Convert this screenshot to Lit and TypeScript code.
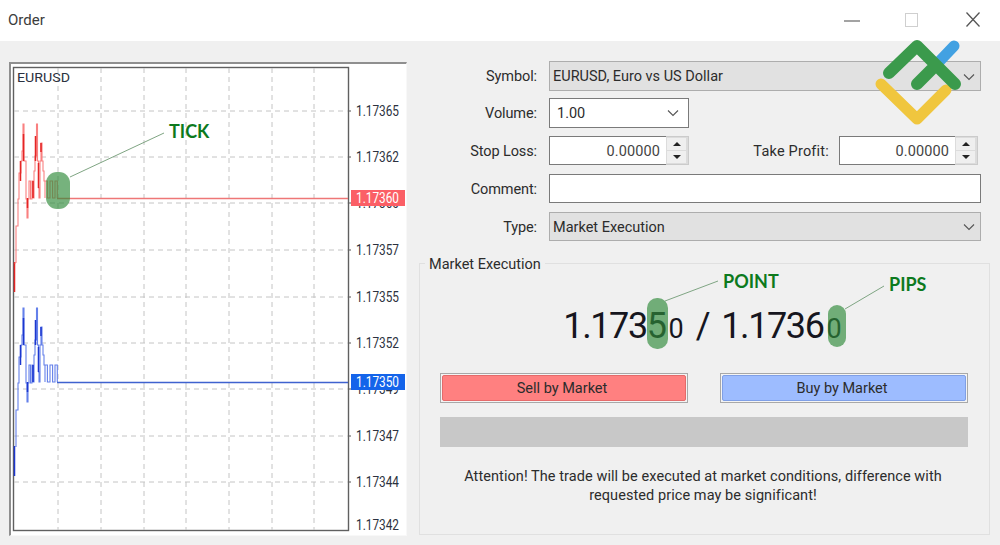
import { LitElement, html, css, svg } from "lit";
import { customElement } from "lit/decorators.js";

const VX = [58, 101, 144, 186, 229, 272, 314];
const HY = [111, 157, 203, 250, 297, 343, 389, 436, 482];
const LABELS: [string, number][] = [
  ["1.17365", 111], ["1.17362", 157], ["1.17360", 203], ["1.17357", 250], ["1.17355", 297],
  ["1.17352", 343], ["1.17349", 389], ["1.17347", 436], ["1.17344", 482], ["1.17342", 525],
];
const WAVE = "M16,447V410H18V383H19V357H21V345H22V335H23V308H24V345H26V383H27V402H28V383H29V365H30.5V383H32V365H33V382H34V355H35V340H36.5V308H37.5V345H38.5V372H39V382H40V345H41V327H42V345H43V355H44V365H45V382V365H47.4V382H50V365H52.6V382H55V365H57.3V382";
const THICK = "M14.5,446V476M20.5,345V365M23.5,318V345M27.5,382V392M33,365V382M35.5,320V345M38.5,347V372M41,327V336";

@customElement("app-root")
export class AppRoot extends LitElement {
  static styles = css`
    :host { display: block; width: 1000px; height: 545px; position: relative; overflow: hidden; background: #f0f0f0;
      font-family: Roboto, "Noto Sans", sans-serif; font-size: 14.5px; color: #2c2c2c; }
    .title { height: 41px; background: #fff; display: flex; align-items: center; justify-content: space-between; padding: 0 20px 2px 8px; box-sizing: border-box; font-size: 15px; color: #3c3c3c; }
    .winbtns { display: flex; align-items: center; }
    .winbtns svg { display: block; }
    .winbtns .mx { margin: 0 48px 0 45px; }
    .body { display: flex; padding: 20px 10px 0 9px; gap: 12px; }
    .chart { width: 398px; height: 474px; margin-top: 1px; flex: none; box-sizing: border-box; border-top: 2px solid #8f8f8f; border-left: 2px solid #8f8f8f; border-right: 1px solid #f8f8f8; border-bottom: 1px solid #f8f8f8; background: #fff; overflow: hidden; }
    .chart svg { display: block; margin: -2px 0 0 -2px; }
    .side { width: 571px; flex: none; }
    .form { display: flex; flex-direction: column; padding-right: 9px; }
    .row { display: flex; align-items: center; height: 29px; margin-top: 9px; }
    .row.r1 { height: 30px; margin-top: 0; }
    .row.r2 { height: 30px; margin-top: 7px; }
    .row.r3 { margin-top: 8px; }
    .end { width: 3px; flex: none; }
    .lbl { width: 118px; margin-right: 12px; text-align: right; flex: none; letter-spacing: -.1px; padding-top: 1px; box-sizing: border-box; }
    .box { height: 100%; box-sizing: border-box; border: 1px solid #7a7a7a; background: #fff; display: flex; align-items: center; padding: 1px 3px 0; }
    .select { flex: 1; background: #e1e1e1; border-color: #adadad; justify-content: space-between; padding-right: 5px; }
    .vol { width: 140px; flex: none; justify-content: space-between; padding: 0 9px 0 7px; }
    .chev { display: block; flex: none; }
    .spin { display: flex; width: 140px; flex: none; height: 100%; }
    .spin.tp { width: 139px; }
    .spin .box { flex: 1; justify-content: flex-end; padding-right: 6px; border-right: none; color: #444; letter-spacing: .1px; }
    .arrows { width: 23px; flex: none; display: flex; flex-direction: column; gap: 1px; box-sizing: border-box; padding: 1px 2px 1px 1px; background: #dcdcdc; border: 1px solid #cbcbcb; border-left: none; }
    .arrows span { flex: 1; background: #efefef; display: flex; align-items: center; justify-content: center; }
    .up { width: 0; height: 0; border: 4px solid transparent; border-top: none; border-bottom: 4px solid #222; }
    .dn { width: 0; height: 0; border: 4px solid transparent; border-bottom: none; border-top: 4px solid #222; }
    .tpl { margin-left: auto; margin-right: 10px; letter-spacing: .2px; }
    .comment { flex: 1; }
    .group { position: relative; margin-top: 22px; height: 272px; box-sizing: border-box; border: 1px solid #e0e0e0; padding: 0 21px 0 20px; display: flex; flex-direction: column; }
    .legend { position: absolute; top: -7px; left: 5px; padding: 0 4px; background: #f0f0f0; line-height: 16px; }
    .price { height: 109px; display: flex; justify-content: center; align-items: baseline; padding: 37px 3px 0 0; box-sizing: border-box; line-height: 50px; color: #16161e; font-size: 36px; letter-spacing: -1.4px; white-space: pre; }
    .price .small { font-size: 27px; letter-spacing: 0; margin-left: 3px; }
    .price .slash { margin: 0 12px; }
    .btns { display: flex; justify-content: space-between; }
    .btn { width: 248px; height: 30px; box-sizing: border-box; border: 1px solid #a8a8a8; padding: 1px; background: #f4f4f4; }
    .btn div { height: 100%; display: flex; align-items: center; justify-content: center; border-radius: 2px; padding: 1px 4px 0 0; box-sizing: border-box; }
    .sell div { background: #ff8080; border: 1px solid #e56a6a; }
    .buy div { background: #9dbcff; border: 1px solid #7f9fe6; }
    .bar { height: 30px; margin-top: 14px; background: #c8c8c8; }
    .note { margin-top: 20px; text-align: center; line-height: 19px; letter-spacing: .07px; padding-right: 2px; }
    .over { position: absolute; left: 0; top: 0; pointer-events: none; }
    .tag { font-family: Lato, "Open Sans", sans-serif; font-weight: 700; font-size: 18px; fill: #0d7a1e; }
  `;

  chart() {
    return html`<svg width="398" height="475" viewBox="9 62 398 475" xmlns="http://www.w3.org/2000/svg">
      <rect x="13.5" y="67.5" width="335" height="463" fill="#fff" stroke="#606060" stroke-width="1.4"/>
      ${VX.map((x) => svg`<line x1=${x} x2=${x} y1="68" y2="530" stroke="#c4c4c4" stroke-dasharray="5 4"/>`)}
      ${HY.map((y) => svg`<line x1="14" x2="348" y1=${y} y2=${y} stroke="#c4c4c4" stroke-dasharray="5 4"/>
        <line x1="349" x2="351" y1=${y} y2=${y} stroke="#555"/>`)}
      <text x="17" y="82" font-size="13.5" fill="#2c3240" textLength="53" lengthAdjust="spacingAndGlyphs">EURUSD</text>
      ${LABELS.map(([t, y]) => svg`<text x="356" y=${y + 5} font-size="14" fill="#2c3240" textLength="43" lengthAdjust="spacingAndGlyphs">${t}</text>`)}
      <g transform="translate(0,-184)" fill="none">
        <path d=${WAVE} stroke="#f98080" stroke-width="1.1"/>
        <path d=${THICK} stroke="#e42525" stroke-width="1.5"/>
        <path d="M14.5,447H16" stroke="#f98080"/>
      </g>
      <path d="M57,198.5H348" stroke="#ee7777" stroke-width="1.5"/>
      <g fill="none">
        <path d=${WAVE} stroke="#6480ea" stroke-width="1.1"/>
        <path d=${THICK} stroke="#1c37cf" stroke-width="1.5"/>
      </g>
      <path d="M57,382.5H348" stroke="#3f62cf" stroke-width="1.5"/>
      <rect x="351" y="190" width="54" height="16" fill="#fb5f66"/>
      <text x="356" y="203" font-size="14" fill="#fff" textLength="43" lengthAdjust="spacingAndGlyphs">1.17360</text>
      <rect x="351" y="374" width="54" height="16" fill="#1464ea"/>
      <text x="356" y="387" font-size="14" fill="#fff" textLength="43" lengthAdjust="spacingAndGlyphs">1.17350</text>
    </svg>`;
  }

  chevron() {
    return html`<svg class="chev" width="12" height="8" viewBox="0 0 12 8"><path d="M1,1.5L6,6.5L11,1.5" fill="none" stroke="#555" stroke-width="1.1"/></svg>`;
  }

  spinner(cls: string) {
    return html`<div class="spin ${cls}"><div class="box">0.00000</div>
      <div class="arrows"><span><i class="up"></i></span><span><i class="dn"></i></span></div></div>`;
  }

  render() {
    return html`
      <div class="title"><span>Order</span>
        <div class="winbtns">
          <svg width="16" height="16" viewBox="0 0 16 16"><path d="M0,9H16" stroke="#666" stroke-width="1.2"/></svg>
          <svg class="mx" width="13" height="14" viewBox="0 0 13 14"><rect x=".5" y=".5" width="12" height="13" fill="#fff" stroke="#cfcfcf"/></svg>
          <svg width="14" height="15" viewBox="0 0 14 15"><path d="M0.5,.5L13.5,14.5M13.5,.5L.5,14.5" stroke="#555" stroke-width="1.3"/></svg>
        </div>
      </div>
      <div class="body">
        <div class="chart">${this.chart()}</div>
        <div class="side">
          <div class="form">
            <div class="row r1"><div class="lbl">Symbol:</div><div class="box select"><span>EURUSD, Euro vs US Dollar</span>${this.chevron()}</div></div>
            <div class="row r2"><div class="lbl">Volume:</div><div class="box vol"><span>1.00</span>${this.chevron()}</div></div>
            <div class="row r3"><div class="lbl">Stop Loss:</div>${this.spinner("")}<div class="lbl tpl">Take Profit:</div>${this.spinner("tp")}<span class="end"></span></div>
            <div class="row"><div class="lbl">Comment:</div><div class="box comment"></div></div>
            <div class="row"><div class="lbl">Type:</div><div class="box select"><span>Market Execution</span>${this.chevron()}</div></div>
          </div>
          <div class="group">
            <div class="legend">Market Execution</div>
            <div class="price"><span>1.1735</span><span class="small">0</span><span class="slash">/</span><span>1.1736</span><span class="small">0</span></div>
            <div class="btns"><div class="btn sell"><div>Sell by Market</div></div><div class="btn buy"><div>Buy by Market</div></div></div>
            <div class="bar"></div>
            <div class="note">Attention! The trade will be executed at market conditions, difference with<br/>requested price may be significant!</div>
          </div>
        </div>
      </div>
      <svg class="over" width="1000" height="545" viewBox="0 0 1000 545" xmlns="http://www.w3.org/2000/svg">
        <path d="M70,177L164,133M665,301L718,281M845,309L884,286" stroke="#7fa583" fill="none"/>
        <rect x="46" y="172" width="24" height="37" rx="11" fill="#2f8a3a" fill-opacity=".66"/>
        <rect x="647" y="298" width="21" height="51" rx="10" fill="#2f8a3a" fill-opacity=".66"/>
        <rect x="828" y="305" width="18" height="42" rx="9" fill="#2f8a3a" fill-opacity=".66"/>
        <text class="tag" x="169" y="138">TICK</text>
        <text class="tag" x="723" y="288">POINT</text>
        <text class="tag" x="889" y="291">PIPS</text>
        <g fill="none" stroke-linecap="round" stroke-linejoin="round">
          <path d="M881,84L917,119L946,90" stroke="#f0c63e" stroke-width="11"/>
          <path d="M934,67L954,46" stroke="#42a1e2" stroke-width="11"/>
          <path d="M889,73L917,46L955,84M917,84L936,65" stroke="#3b9a4c" stroke-width="12"/>
        </g>
      </svg>
    `;
  }
}
